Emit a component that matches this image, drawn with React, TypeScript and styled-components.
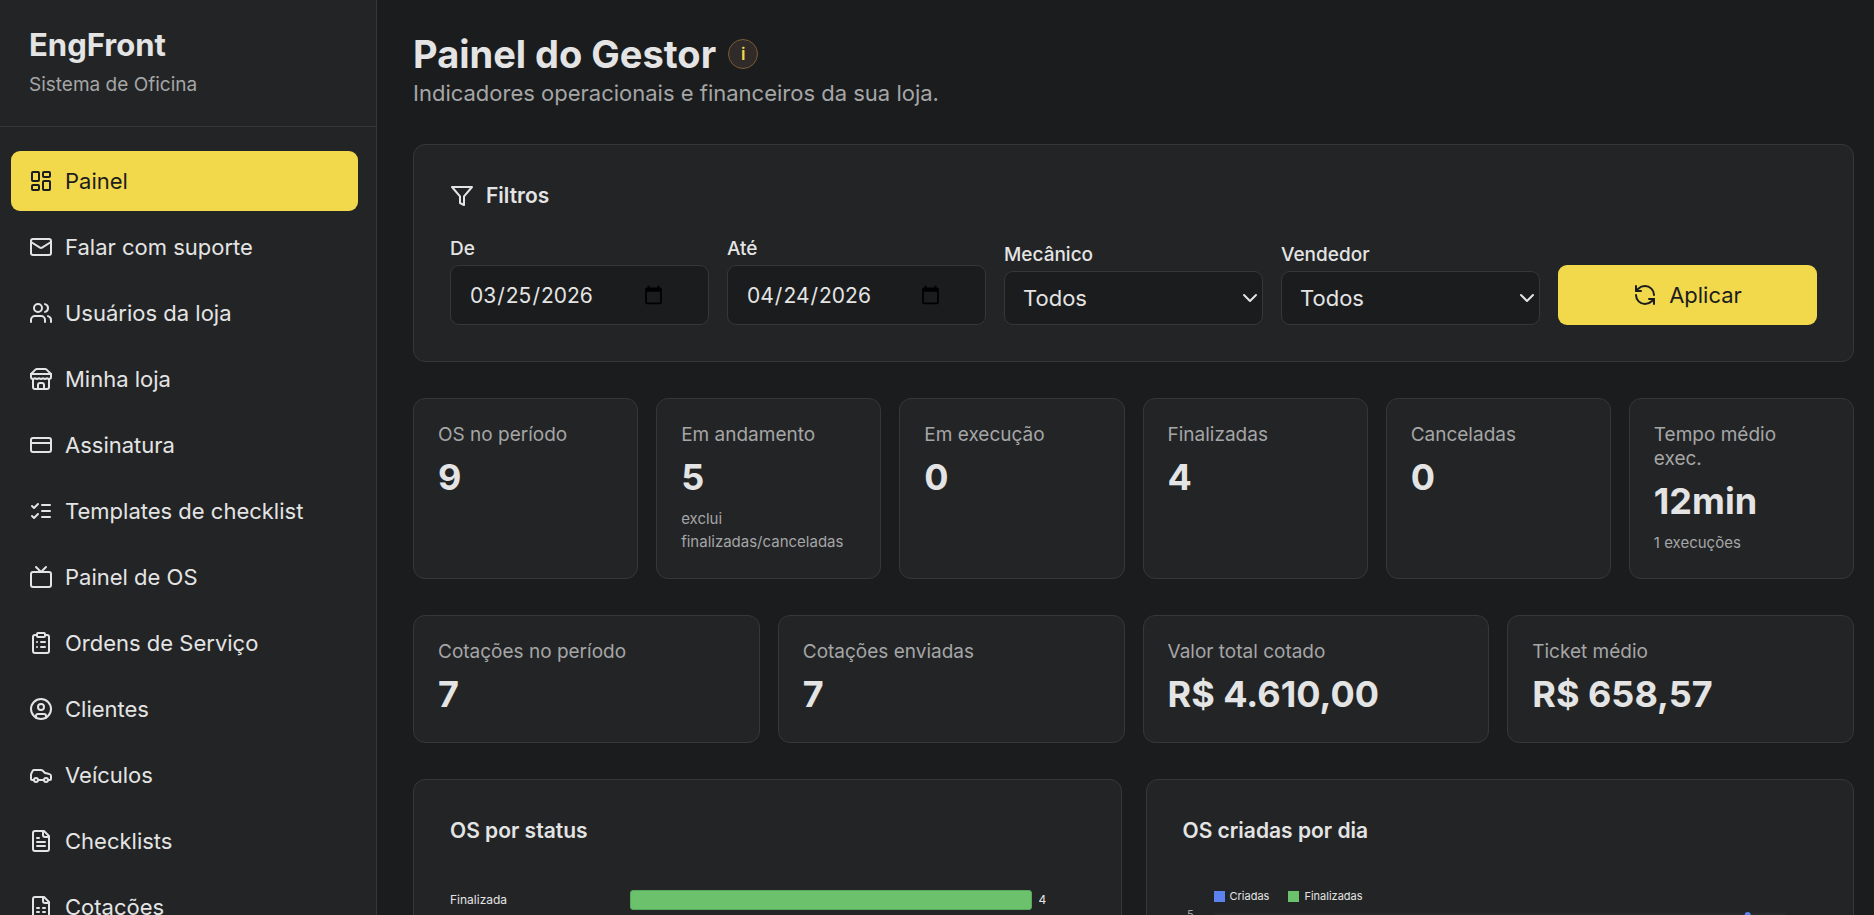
import React from 'react';
import styled, { createGlobalStyle } from 'styled-components';

const c = {
  page: '#1b1c1e',
  panel: '#232426',
  line: '#363739',
  text: '#e4e4e4',
  muted: '#a5a6a6',
  accent: '#f2d94b',
  onAccent: '#1b1c1e',
  green: '#6cc16c',
  blue: '#5b82ee',
};

const GlobalStyle = createGlobalStyle`
  *, *::before, *::after { box-sizing: border-box; }
  body {
    margin: 0;
    background: ${c.page};
    color: ${c.text};
    font-family: Inter, "Open Sans", sans-serif;
    font-size: 22px;
  }
  h1, h2, p, ul, dl, dd { margin: 0; padding: 0; }
  button, input, select { font: inherit; color: inherit; }
`;

const Shell = styled.div`
  display: flex;
  height: 100vh;
  overflow: hidden;
`;

const Sidebar = styled.aside`
  flex: none;
  width: 377px;
  display: flex;
  flex-direction: column;
  background: ${c.panel};
  border-right: 1px solid ${c.line};
`;

const Brand = styled.div`
  padding: 26px 29px;
  border-bottom: 1px solid ${c.line};
`;

const BrandName = styled.p`
  font-size: 31px;
  line-height: 38px;
  font-weight: 700;
`;

const BrandNote = styled.p`
  margin-top: 6px;
  font-size: 19px;
  line-height: 30px;
  color: ${c.muted};
`;

const Nav = styled.nav`
  flex: 1;
  min-height: 0;
  overflow-y: auto;
  scrollbar-width: none;
  padding: 24px 18px 24px 11px;
`;

const NavList = styled.ul`
  list-style: none;
  display: flex;
  flex-direction: column;
  gap: 6px;
`;

const NavLink = styled.a<{ $active?: boolean }>`
  display: flex;
  align-items: center;
  gap: 12px;
  height: 60px;
  padding: 0 18px;
  border-radius: 9px;
  text-decoration: none;
  white-space: nowrap;
  color: ${(p) => (p.$active ? c.onAccent : c.text)};
  background: ${(p) => (p.$active ? c.accent : 'transparent')};
`;

const Glyph = styled.svg`
  flex: none;
  width: 24px;
  height: 24px;
  fill: none;
  stroke: currentColor;
  stroke-width: 2;
  stroke-linecap: round;
  stroke-linejoin: round;
`;

const Main = styled.main`
  flex: 1;
  min-width: 0;
  overflow-y: auto;
  scrollbar-width: none;
  display: flex;
  flex-direction: column;
  gap: 36px;
  padding: 30px 20px 36px 36px;
`;

const TitleRow = styled.div`
  display: flex;
  align-items: center;
  gap: 12px;
`;

const Title = styled.h1`
  font-size: 38px;
  line-height: 48px;
  font-weight: 700;
`;

const InfoButton = styled.button`
  width: 30px;
  height: 30px;
  padding: 0;
  border: 1px solid #7a5c35;
  border-radius: 50%;
  background: #302b29;
  color: ${c.accent};
  font-size: 17px;
  line-height: 28px;
  font-weight: 600;
`;

const Subtitle = styled.p`
  line-height: 30px;
  color: ${c.muted};
`;

const Panel = styled.section`
  flex: none;
  min-width: 0;
  padding: 36px;
  background: ${c.panel};
  border: 1px solid ${c.line};
  border-radius: 12px;
`;

const PanelTitle = styled.h2`
  display: flex;
  align-items: center;
  gap: 12px;
  font-size: 21px;
  line-height: 30px;
  font-weight: 600;
`;

const FilterForm = styled.form`
  display: grid;
  grid-template-columns: repeat(5, minmax(0, 1fr));
  align-items: end;
  gap: 18px;
  margin-top: 26px;
`;

const Field = styled.div`
  display: flex;
  flex-direction: column;
  gap: 4px;
`;

const Label = styled.label`
  font-size: 19px;
  line-height: 24px;
  font-weight: 500;
`;

const DateInput = styled.input`
  width: 100%;
  height: 60px;
  padding: 0 42px 0 18px;
  border: 1px solid ${c.line};
  border-radius: 9px;
  background: ${c.page};
  font-size: 21px;
`;

const SelectBox = styled.div`
  position: relative;

  svg {
    position: absolute;
    right: 1px;
    top: 15px;
    pointer-events: none;
  }
`;

const Select = styled.select`
  display: block;
  appearance: none;
  width: 100%;
  height: 54px;
  padding: 0 30px 0 18px;
  border: 1px solid ${c.line};
  border-radius: 9px;
  background: ${c.page};
`;

const ApplyButton = styled.button`
  display: flex;
  align-items: center;
  justify-content: center;
  gap: 12px;
  height: 60px;
  border: 0;
  border-radius: 9px;
  background: ${c.accent};
  color: ${c.onAccent};
`;

const Cards = styled.dl<{ $columns: number }>`
  flex: none;
  display: grid;
  grid-template-columns: repeat(${(p) => p.$columns}, minmax(0, 1fr));
  gap: 18px;
`;

const Card = styled.div`
  display: flex;
  flex-direction: column;
  gap: 6px;
  padding: 24px;
  background: ${c.panel};
  border: 1px solid ${c.line};
  border-radius: 12px;
`;

const CardLabel = styled.dt`
  padding-right: 12px;
  font-size: 19px;
  line-height: 24px;
  color: ${c.muted};
`;

const CardValue = styled.dd`
  font-size: 36px;
  line-height: 48px;
  font-weight: 700;
`;

const CardNote = styled.dd`
  font-size: 15px;
  line-height: 23px;
  color: ${c.muted};
`;

const Charts = styled.div`
  flex: none;
  display: grid;
  grid-template-columns: repeat(2, minmax(0, 1fr));
  gap: 24px;
`;

const BarRow = styled.div`
  display: grid;
  grid-template-columns: 180px minmax(0, 1fr) 46px;
  align-items: center;
  column-gap: 7px;
  margin-top: 44px;
  font-size: 12px;
  line-height: 20px;
`;

const BarTrack = styled.div`
  margin-left: -7px;
`;

const Bar = styled.div`
  height: 20px;
  border: 1px solid #58a95a;
  border-radius: 3px;
  background: ${c.green};
`;

const Legend = styled.div`
  display: flex;
  gap: 19px;
  margin: 42px 0 0 31px;
  font-size: 11px;
  line-height: 16px;
`;

const LegendItem = styled.span`
  display: flex;
  align-items: center;
  gap: 5px;
`;

const Swatch = styled.span<{ $color: string }>`
  width: 11px;
  height: 11px;
  background: ${(p) => p.$color};
`;

const LineChart = styled.svg`
  display: block;
  width: 100%;
  height: 200px;
  font-size: 11px;
`;

type IconName = keyof typeof shapes;

const fileOutline = (
  <>
    <path d="M15 2H6a2 2 0 0 0-2 2v16a2 2 0 0 0 2 2h12a2 2 0 0 0 2-2V7Z" />
    <path d="M14 2v4a2 2 0 0 0 2 2h4" />
  </>
);

const shapes = {
  dashboard: (
    <>
      <rect width="7" height="9" x="3" y="3" rx="1" />
      <rect width="7" height="5" x="14" y="3" rx="1" />
      <rect width="7" height="9" x="14" y="12" rx="1" />
      <rect width="7" height="5" x="3" y="16" rx="1" />
    </>
  ),
  mail: (
    <>
      <rect width="20" height="16" x="2" y="4" rx="2" />
      <path d="m22 7-8.97 5.7a1.94 1.94 0 0 1-2.06 0L2 7" />
    </>
  ),
  users: (
    <>
      <path d="M16 21v-2a4 4 0 0 0-4-4H6a4 4 0 0 0-4 4v2" />
      <circle cx="9" cy="7" r="4" />
      <path d="M22 21v-2a4 4 0 0 0-3-3.87" />
      <path d="M16 3.13a4 4 0 0 1 0 7.75" />
    </>
  ),
  store: (
    <>
      <path d="m2 7 4.41-4.41A2 2 0 0 1 7.83 2h8.34a2 2 0 0 1 1.42.59L22 7" />
      <path d="M4 12v8a2 2 0 0 0 2 2h12a2 2 0 0 0 2-2v-8" />
      <path d="M15 22v-4a2 2 0 0 0-2-2h-2a2 2 0 0 0-2 2v4" />
      <path d="M2 7h20" />
      <path d="M22 7v3a2 2 0 0 1-2 2a2.7 2.7 0 0 1-1.59-.63.7.7 0 0 0-.82 0A2.7 2.7 0 0 1 16 12a2.7 2.7 0 0 1-1.59-.63.7.7 0 0 0-.82 0A2.7 2.7 0 0 1 12 12a2.7 2.7 0 0 1-1.59-.63.7.7 0 0 0-.82 0A2.7 2.7 0 0 1 8 12a2.7 2.7 0 0 1-1.59-.63.7.7 0 0 0-.82 0A2.7 2.7 0 0 1 4 12a2 2 0 0 1-2-2V7" />
    </>
  ),
  card: (
    <>
      <rect width="20" height="14" x="2" y="5" rx="2" />
      <path d="M2 10h20" />
    </>
  ),
  checks: (
    <>
      <path d="m3 17 2 2 4-4" />
      <path d="m3 7 2 2 4-4" />
      <path d="M13 6h8M13 12h8M13 18h8" />
    </>
  ),
  tv: (
    <>
      <rect width="20" height="15" x="2" y="7" rx="2" />
      <path d="m17 2-5 5-5-5" />
    </>
  ),
  clipboard: (
    <>
      <rect width="8" height="4" x="8" y="2" rx="1" />
      <path d="M16 4h2a2 2 0 0 1 2 2v14a2 2 0 0 1-2 2H6a2 2 0 0 1-2-2V6a2 2 0 0 1 2-2h2" />
      <path d="M12 11h4M12 16h4M8 11h.01M8 16h.01" />
    </>
  ),
  user: (
    <>
      <circle cx="12" cy="12" r="10" />
      <circle cx="12" cy="10" r="3" />
      <path d="M7 20.662V19a2 2 0 0 1 2-2h6a2 2 0 0 1 2 2v1.662" />
    </>
  ),
  car: (
    <>
      <path d="M19 17h2c.6 0 1-.4 1-1v-3c0-.9-.7-1.7-1.5-1.9C18.7 10.6 16 10 16 10s-1.3-1.4-2.2-2.3c-.5-.4-1.1-.7-1.8-.7H5c-.6 0-1.1.4-1.4.9l-1.4 2.9A3.7 3.7 0 0 0 2 12v4c0 .6.4 1 1 1h2" />
      <circle cx="7" cy="17" r="2" />
      <path d="M9 17h6" />
      <circle cx="17" cy="17" r="2" />
    </>
  ),
  file: (
    <>
      {fileOutline}
      <path d="M10 9H8M16 13H8M16 17H8" />
    </>
  ),
  sheet: (
    <>
      {fileOutline}
      <path d="M8 13h2M14 13h2M8 17h2M14 17h2" />
    </>
  ),
  filter: <path d="M22 3H2l8 9.46V19l4 2v-8.54L22 3z" />,
  chevron: <path d="m6 9 6 6 6-6" />,
  refresh: (
    <>
      <path d="M21 12a9 9 0 0 0-9-9 9.75 9.75 0 0 0-6.74 2.74L3 8" />
      <path d="M3 3v5h5" />
      <path d="M3 12a9 9 0 0 0 9 9 9.75 9.75 0 0 0 6.74-2.74L21 16" />
      <path d="M16 16h5v5" />
    </>
  ),
};

const Icon = ({ name }: { name: IconName }) => (
  <Glyph viewBox="0 0 24 24" aria-hidden="true">
    {shapes[name]}
  </Glyph>
);

const navItems: { icon: IconName; label: string }[] = [
  { icon: 'dashboard', label: 'Painel' },
  { icon: 'mail', label: 'Falar com suporte' },
  { icon: 'users', label: 'Usuários da loja' },
  { icon: 'store', label: 'Minha loja' },
  { icon: 'card', label: 'Assinatura' },
  { icon: 'checks', label: 'Templates de checklist' },
  { icon: 'tv', label: 'Painel de OS' },
  { icon: 'clipboard', label: 'Ordens de Serviço' },
  { icon: 'user', label: 'Clientes' },
  { icon: 'car', label: 'Veículos' },
  { icon: 'file', label: 'Checklists' },
  { icon: 'sheet', label: 'Cotações' },
];

type Metric = { label: string; value: string; note?: string };

const orderMetrics: Metric[] = [
  { label: 'OS no período', value: '9' },
  { label: 'Em andamento', value: '5', note: 'exclui finalizadas/canceladas' },
  { label: 'Em execução', value: '0' },
  { label: 'Finalizadas', value: '4' },
  { label: 'Canceladas', value: '0' },
  { label: 'Tempo médio exec.', value: '12min', note: '1 execuções' },
];

const quoteMetrics: Metric[] = [
  { label: 'Cotações no período', value: '7' },
  { label: 'Cotações enviadas', value: '7' },
  { label: 'Valor total cotado', value: 'R$ 4.610,00' },
  { label: 'Ticket médio', value: 'R$ 658,57' },
];

const MetricCards = ({ items }: { items: Metric[] }) => (
  <Cards $columns={items.length}>
    {items.map((m) => (
      <Card key={m.label}>
        <CardLabel>{m.label}</CardLabel>
        <CardValue>{m.value}</CardValue>
        {m.note && <CardNote>{m.note}</CardNote>}
      </Card>
    ))}
  </Cards>
);

const SelectField = ({ id, label }: { id: string; label: string }) => (
  <Field>
    <Label htmlFor={id}>{label}</Label>
    <SelectBox>
      <Select id={id}>
        <option>Todos</option>
      </Select>
      <Icon name="chevron" />
    </SelectBox>
  </Field>
);

export default function App() {
  return (
    <>
      <GlobalStyle />
      <Shell>
        <Sidebar>
          <Brand>
            <BrandName>EngFront</BrandName>
            <BrandNote>Sistema de Oficina</BrandNote>
          </Brand>
          <Nav>
            <NavList>
              {navItems.map((item, i) => (
                <li key={item.label}>
                  <NavLink href="#" $active={i === 0}>
                    <Icon name={item.icon} />
                    {item.label}
                  </NavLink>
                </li>
              ))}
            </NavList>
          </Nav>
        </Sidebar>

        <Main>
          <header>
            <TitleRow>
              <Title>Painel do Gestor</Title>
              <InfoButton type="button">i</InfoButton>
            </TitleRow>
            <Subtitle>Indicadores operacionais e financeiros da sua loja.</Subtitle>
          </header>

          <Panel>
            <PanelTitle>
              <Icon name="filter" />
              Filtros
            </PanelTitle>
            <FilterForm onSubmit={(e) => e.preventDefault()}>
              <Field>
                <Label htmlFor="from">De</Label>
                <DateInput id="from" type="date" defaultValue="2026-03-25" />
              </Field>
              <Field>
                <Label htmlFor="to">Até</Label>
                <DateInput id="to" type="date" defaultValue="2026-04-24" />
              </Field>
              <SelectField id="mechanic" label="Mecânico" />
              <SelectField id="seller" label="Vendedor" />
              <ApplyButton type="submit">
                <Icon name="refresh" />
                Aplicar
              </ApplyButton>
            </FilterForm>
          </Panel>

          <MetricCards items={orderMetrics} />
          <MetricCards items={quoteMetrics} />

          <Charts>
            <Panel>
              <PanelTitle>OS por status</PanelTitle>
              <BarRow>
                <span>Finalizada</span>
                <BarTrack>
                  <Bar />
                </BarTrack>
                <span>4</span>
              </BarRow>
            </Panel>
            <Panel>
              <PanelTitle>OS criadas por dia</PanelTitle>
              <Legend>
                <LegendItem>
                  <Swatch $color={c.blue} />
                  Criadas
                </LegendItem>
                <LegendItem>
                  <Swatch $color={c.green} />
                  Finalizadas
                </LegendItem>
              </Legend>
              <LineChart role="img" aria-label="OS criadas por dia">
                <text x="4" y="14" fill={c.muted}>5</text>
                <line x1="31" x2="95%" y1="10" y2="10" stroke="#2e2f31" />
                <line x1="31" x2="84%" y1="180" y2="180" stroke={c.blue} strokeWidth="2" />
                <line x1="84%" x2="89%" y1="180" y2="11" stroke={c.blue} strokeWidth="2" />
                <circle cx="89%" cy="11" r="3" fill={c.blue} />
              </LineChart>
            </Panel>
          </Charts>
        </Main>
      </Shell>
    </>
  );
}
